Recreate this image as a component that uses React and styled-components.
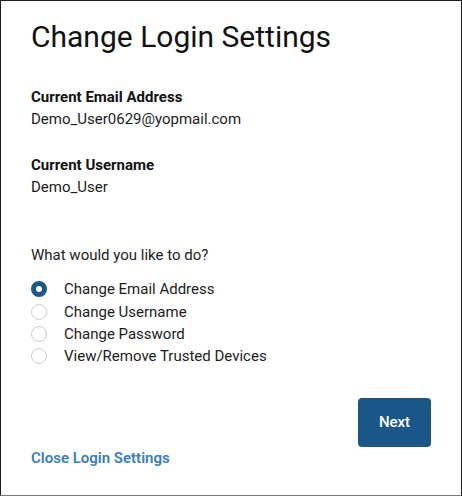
import React, { useState } from "react";
import styled, { createGlobalStyle } from "styled-components";

const GlobalStyle = createGlobalStyle`
  html, body {
    margin: 0;
    padding: 0;
    background: #ffffff;
  }
  body {
    font-family: Roboto, "Liberation Sans", Arial, sans-serif;
    color: #1c1c1c;
  }
`;

const options = [
  "Change Email Address",
  "Change Username",
  "Change Password",
  "View/Remove Trusted Devices",
];

function App() {
  const [choice, setChoice] = useState(0);

  return (
    <>
      <GlobalStyle />
      <Panel>
        <Title>Change Login Settings</Title>

        <Field>
          <Label>Current Email Address</Label>
          <Value>Demo_User0629@yopmail.com</Value>
        </Field>

        <Field className="second">
          <Label>Current Username</Label>
          <Value>Demo_User</Value>
        </Field>

        <Question>What would you like to do?</Question>

        <RadioList>
          {options.map((opt, i) => (
            <RadioRow key={opt} onClick={() => setChoice(i)}>
              <Radio $checked={choice === i} />
              <span>{opt}</span>
            </RadioRow>
          ))}
        </RadioList>

        <Actions>
          <NextButton type="button">Next</NextButton>
        </Actions>

        <CloseLink href="#">Close Login Settings</CloseLink>
      </Panel>
    </>
  );
}

const Panel = styled.div`
  box-sizing: border-box;
  width: 462px;
  height: 496px;
  border: 1px solid #1e1e1e;
  border-bottom-color: #7a7a7a;
  padding: 18px 30px 0 30px;
  display: flex;
  flex-direction: column;
  background: #fff;
`;

const Title = styled.h1`
  margin: 0;
  font-size: 30px;
  line-height: 36px;
  font-weight: 400;
  color: #111;
`;

const Field = styled.div`
  margin-top: 31px;
  display: flex;
  flex-direction: column;

  &.second {
    margin-top: 24px;
  }
`;

const Label = styled.div`
  font-size: 15px;
  line-height: 22px;
  font-weight: 700;
  color: #111;
`;

const Value = styled.div`
  font-size: 15px;
  line-height: 22px;
  color: #1c1c1c;
`;

const Question = styled.div`
  margin-top: 46px;
  font-size: 15px;
  line-height: 22px;
  color: #1c1c1c;
`;

const RadioList = styled.div`
  margin-top: 12px;
  display: flex;
  flex-direction: column;
`;

const RadioRow = styled.label`
  display: flex;
  align-items: center;
  height: 22.4px;
  font-size: 15px;
  color: #1c1c1c;
  cursor: pointer;
`;

const Radio = styled.span`
  box-sizing: border-box;
  width: 16px;
  height: 16px;
  border-radius: 50%;
  margin-right: 17px;
  flex-shrink: 0;
  border: ${(p) => (p.$checked ? "5px solid #1b5787" : "1px solid #c9ccd1")};
  background: #fff;
`;

const Actions = styled.div`
  margin-top: 30px;
  display: flex;
  justify-content: flex-end;
`;

const NextButton = styled.button`
  width: 73px;
  height: 49px;
  border: none;
  border-radius: 4px;
  background: #1a5788;
  color: #fff;
  font-family: inherit;
  font-size: 15px;
  font-weight: 500;
  cursor: pointer;
`;

const CloseLink = styled.a`
  margin-top: 0;
  align-self: flex-start;
  font-size: 15px;
  line-height: 22px;
  font-weight: 600;
  color: #3a7cc0;
  text-decoration: none;
`;

export default App;
